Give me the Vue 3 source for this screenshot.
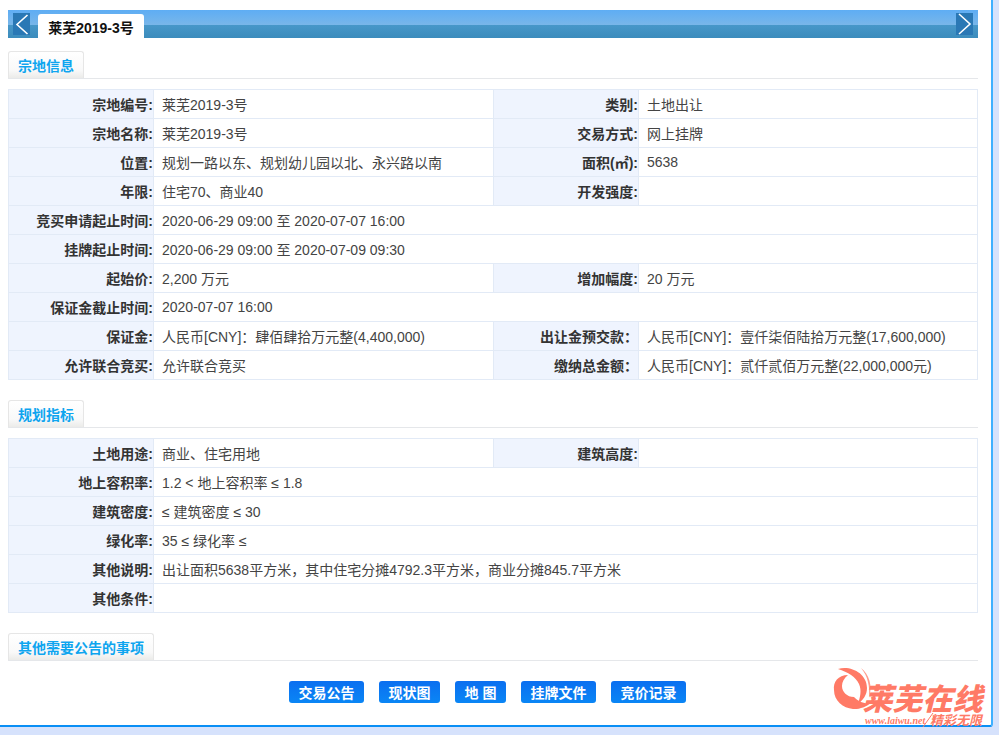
<script setup>
const sections = [
  {
    title: '宗地信息',
    rows: [
      ['宗地编号:', '莱芜2019-3号', '类别:', '土地出让'],
      ['宗地名称:', '莱芜2019-3号', '交易方式:', '网上挂牌'],
      ['位置:', '规划一路以东、规划幼儿园以北、永兴路以南', '面积(㎡):', '5638'],
      ['年限:', '住宅70、商业40', '开发强度:', ''],
      ['竞买申请起止时间:', '2020-06-29 09:00 至 2020-07-07 16:00'],
      ['挂牌起止时间:', '2020-06-29 09:00 至 2020-07-09 09:30'],
      ['起始价:', '2,200 万元', '增加幅度:', '20 万元'],
      ['保证金截止时间:', '2020-07-07 16:00'],
      ['保证金:', '人民币[CNY]\uFF1A肆佰肆拾万元整(4,400,000)', '出让金预交款\uFF1A', '人民币[CNY]\uFF1A壹仟柒佰陆拾万元整(17,600,000)'],
      ['允许联合竞买:', '允许联合竞买', '缴纳总金额\uFF1A', '人民币[CNY]\uFF1A贰仟贰佰万元整(22,000,000元)']
    ]
  },
  {
    title: '规划指标',
    rows: [
      ['土地用途:', '商业、住宅用地', '建筑高度:', ''],
      ['地上容积率:', '1.2 < 地上容积率 ≤ 1.8'],
      ['建筑密度:', '≤ 建筑密度 ≤ 30'],
      ['绿化率:', '35 ≤ 绿化率 ≤'],
      ['其他说明:', '出让面积5638平方米\uFF0C其中住宅分摊4792.3平方米\uFF0C商业分摊845.7平方米'],
      ['其他条件:', '']
    ]
  }
]
const buttons = ['交易公告', '现状图', '地 图', '挂牌文件', '竞价记录']
</script>

<template>
  <div class="panel">
    <div class="tabbar">
      <span class="arrow">
        <svg width="17" height="22" viewBox="0 0 17 22"><path d="M14.5 2 L4 11.5 L14.5 21" fill="none" stroke="#fff" stroke-width="1.6" /></svg>
      </span>
      <span class="tab">莱芜2019-3号</span>
      <span class="arrow arrow-right">
        <svg width="17" height="22" viewBox="0 0 17 22"><path d="M3 1 L14 11 L3 21" fill="none" stroke="#fff" stroke-width="1.6" /></svg>
      </span>
    </div>

    <section v-for="s in sections" :key="s.title" class="section">
      <div class="head"><h2 class="head-tab">{{ s.title }}</h2></div>
      <table class="grid">
        <colgroup>
          <col class="c1" /><col class="c2" /><col class="c3" /><col />
        </colgroup>
        <tbody>
          <tr v-for="r in s.rows" :key="r[0]">
            <th>{{ r[0] }}</th>
            <td :colspan="r.length === 2 ? 3 : 1">{{ r[1] }}</td>
            <template v-if="r.length > 2">
              <th>{{ r[2] }}</th>
              <td>{{ r[3] }}</td>
            </template>
          </tr>
        </tbody>
      </table>
    </section>

    <div class="head"><h2 class="head-tab">其他需要公告的事项</h2></div>
    <div class="buttons">
      <button v-for="b in buttons" :key="b" class="btn">{{ b }}</button>
    </div>

    <div class="logo">
      <svg class="swirl" width="165" height="65" viewBox="0 0 165 65">
        <path d="M20 13 C10 13 5 20 6 28 C6 39 15 46 25 47 C31 47.5 38 45 43 41 C36 42.5 30 39 26 35 C19 35 14 30 14 24 C14 20 16 16 20 13 Z" fill="#ff7a66" />
        <path d="M10 7 C22 3 39 11 39 26 C39 33 35 38 30 42 C32 35 34 29 31 22 C28 15 20 10 10 7 Z" fill="#ff7a66" />
        <path d="M33 6 C41 12 45 24 41 36 C42 25 40 14 33 6 Z" fill="#ff9c8c" />
        <path d="M95 65 L105 51" stroke="#ff7a66" stroke-width="1" />
      </svg>
      <span class="logo-name">莱芜在线</span>
      <span class="logo-url">www.laiwu.net</span>
      <span class="logo-slogan">精彩无限</span>
    </div>
  </div>
</template>

<style scoped>
.panel {
  position: relative;
  box-sizing: border-box;
  width: 993px;
  height: 727px;
  padding: 10px 13px 0 8px;
  background: #fff;
  border-right: 2px solid #3fb0ff;
  border-bottom: 2px solid #0a8ff5;
  border-bottom-right-radius: 3px;
  font-family: "Liberation Sans", "Noto Sans CJK SC", sans-serif;
  font-size: 14px;
  color: #333;
}
.tabbar {
  display: flex;
  align-items: flex-end;
  box-sizing: border-box;
  height: 28px;
  padding: 0 5px;
  background: linear-gradient(#5eadf4 0, #78b6e9 52%, #4797c9 53%, #3c8cbc 100%);
}
.arrow {
  align-self: flex-start;
  margin-top: 3px;
  width: 17px;
  height: 22px;
  background: #2a78b5;
}
.arrow svg { display: block; }
.arrow-right { margin-left: auto; }
.tab {
  box-sizing: border-box;
  width: 106px;
  height: 24px;
  margin-left: 8px;
  line-height: 28px;
  text-align: center;
  background: #fff;
  border-radius: 3px 3px 0 0;
  font-weight: 700;
  color: #111;
}
.section { margin-bottom: 20px; }
.section:first-of-type { margin-top: 13px; }
.head {
  box-sizing: border-box;
  height: 28px;
  border-bottom: 1px solid #e5e7ea;
}
.section .head { margin-bottom: 10px; }
.head-tab {
  display: inline-block;
  box-sizing: border-box;
  height: 27px;
  margin: 0;
  padding: 0 9px;
  line-height: 28px;
  font-size: 14px;
  font-weight: 700;
  color: #0ea5ef;
  background: linear-gradient(#fff 0, #f9f9f9 70%, #ebebe9 100%);
  border: 1px solid #e6e6e6;
  border-bottom: 0;
  border-radius: 3px 3px 0 0;
  vertical-align: top;
}
.grid {
  width: 970px;
  table-layout: fixed;
  border-collapse: collapse;
  border: 1px solid #e2eaf6;
}
.c1 { width: 145px; }
.c2 { width: 340px; }
.c3 { width: 145px; }
.grid tr { height: 29px; }
.grid th, .grid td {
  box-sizing: border-box;
  height: 29px;
  padding: 0;
  border: 1px solid #e2eaf6;
  font-size: 14px;
}
.grid th {
  text-align: right;
  background: #eff4fe;
  font-weight: 700;
  color: #333;
}
.grid td {
  padding-left: 8px;
  background: #fff;
  color: #444;
}
.buttons {
  display: flex;
  justify-content: center;
  gap: 15px;
  margin: 20px 11px 0 0;
}
.btn {
  height: 22px;
  padding: 0 9.5px;
  border: 0;
  border-radius: 3px;
  background: linear-gradient(#0b6ff0, #0a86f5);
  color: #fff;
  font: 700 14px "Liberation Sans", "Noto Sans CJK SC", sans-serif;
}
.logo {
  position: absolute;
  right: -2px;
  bottom: -2px;
  width: 165px;
  height: 65px;
  color: #ff7a66;
}
.swirl {
  position: absolute;
  left: 0;
  top: 0;
}
.logo-name {
  position: absolute;
  left: 37px;
  top: 21px;
  font-size: 30px;
  line-height: 34px;
  font-weight: 900;
  white-space: nowrap;
  transform: skewX(-14deg);
}
.logo-url {
  position: absolute;
  left: 37px;
  top: 53px;
  font: italic 700 10px/12px "Liberation Serif", serif;
  white-space: nowrap;
}
.logo-slogan {
  position: absolute;
  left: 102px;
  top: 52px;
  font-size: 13px;
  line-height: 14px;
  font-weight: 700;
  font-style: italic;
  white-space: nowrap;
}
</style>

<style>
html, body {
  margin: 0;
  height: 100%;
  overflow: hidden;
  background: #d6e2fc;
}
</style>
